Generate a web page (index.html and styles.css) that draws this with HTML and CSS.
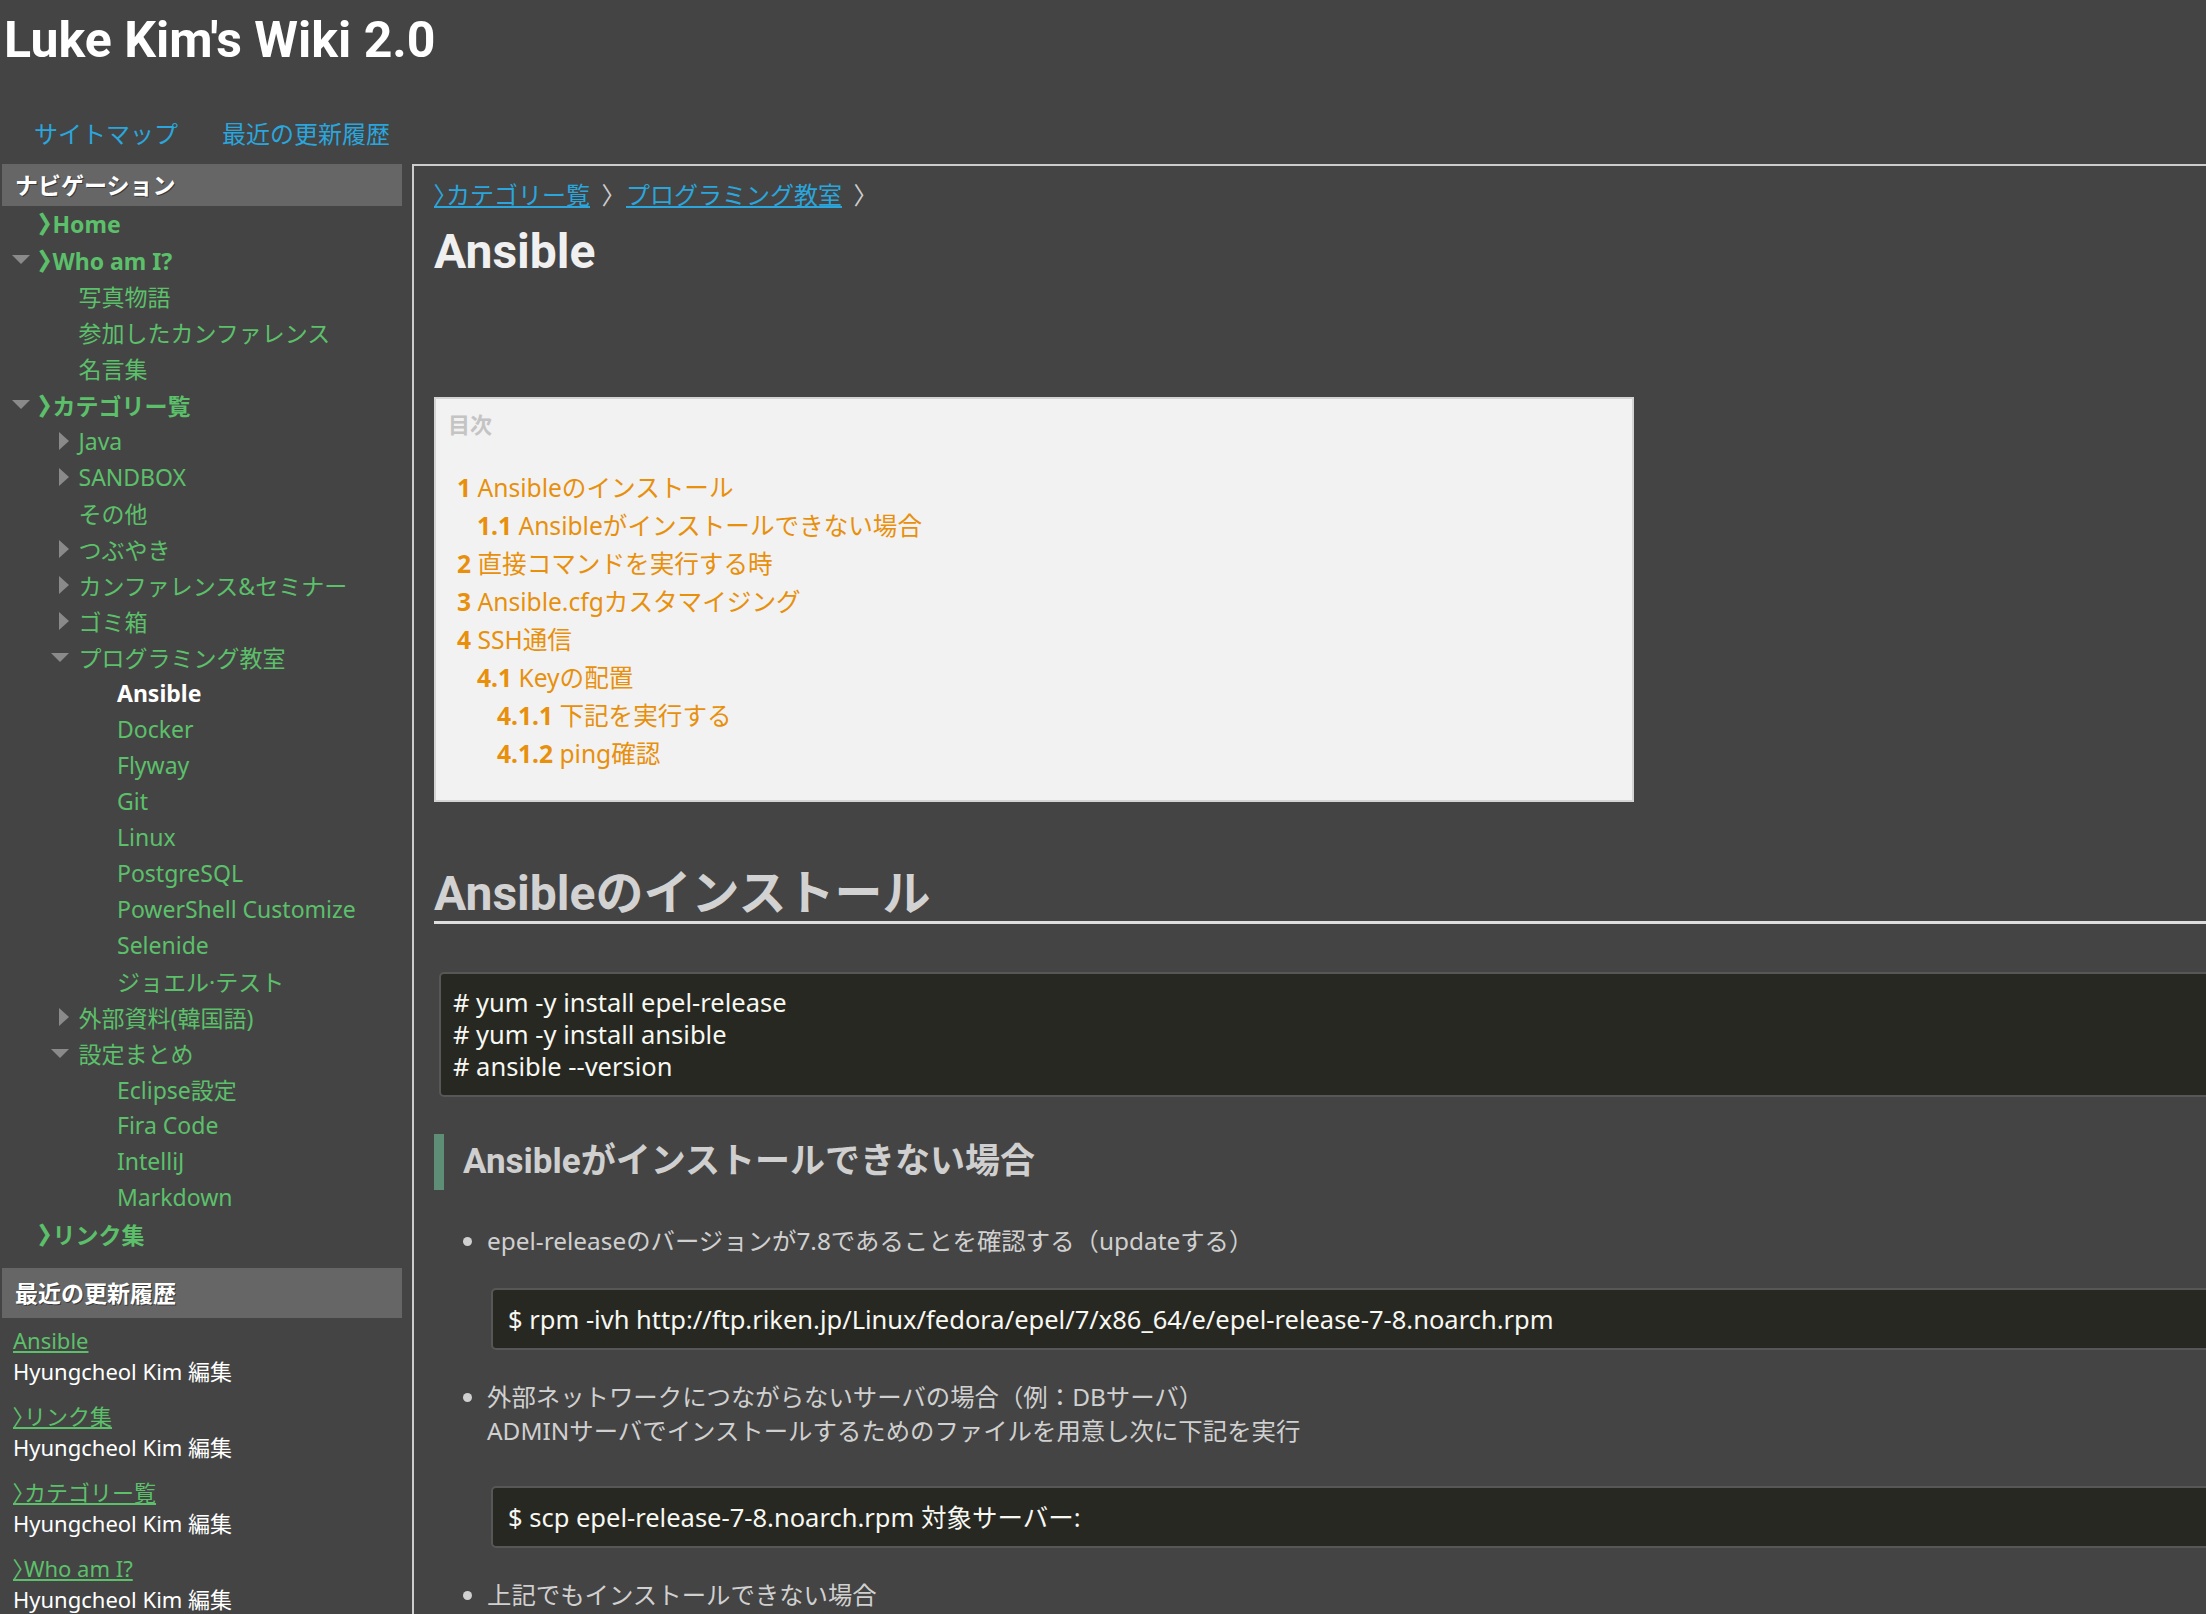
FILE: index.html
```html
<!DOCTYPE html>
<html lang="ja">
<head>
<meta charset="utf-8">
<title>Ansible - Luke Kim's Wiki 2.0</title>
<link rel="stylesheet" href="styles.css">
</head>
<body>
<header class="site-header">
  <h1 class="site-title">Luke Kim's Wiki 2.0</h1>
  <nav class="top-nav">
    <a href="#">サイトマップ</a>
    <a href="#">最近の更新履歴</a>
  </nav>
</header>
<div class="layout">
  <aside class="sidebar">
    <h2 class="side-head">ナビゲーション</h2>
    <ul class="tree">
      <li class="top"><div class="row"><span class="tg"></span><a class="lnk" href="#"><span class="chev">〉</span>Home</a></div></li>
      <li class="top"><div class="row"><span class="tg"><i class="down"></i></span><a class="lnk" href="#"><span class="chev">〉</span>Who am I?</a></div>
        <ul>
          <li><div class="row"><span class="tg"></span><a class="lnk" href="#">写真物語</a></div></li>
          <li><div class="row"><span class="tg"></span><a class="lnk" href="#">参加したカンファレンス</a></div></li>
          <li><div class="row"><span class="tg"></span><a class="lnk" href="#">名言集</a></div></li>
        </ul>
      </li>
      <li class="top"><div class="row"><span class="tg"><i class="down"></i></span><a class="lnk" href="#"><span class="chev">〉</span>カテゴリー覧</a></div>
        <ul>
          <li><div class="row"><span class="tg"><i class="right"></i></span><a class="lnk" href="#">Java</a></div></li>
          <li><div class="row"><span class="tg"><i class="right"></i></span><a class="lnk" href="#">SANDBOX</a></div></li>
          <li><div class="row"><span class="tg"></span><a class="lnk" href="#">その他</a></div></li>
          <li><div class="row"><span class="tg"><i class="right"></i></span><a class="lnk" href="#">つぶやき</a></div></li>
          <li><div class="row"><span class="tg"><i class="right"></i></span><a class="lnk" href="#">カンファレンス&amp;セミナー</a></div></li>
          <li><div class="row"><span class="tg"><i class="right"></i></span><a class="lnk" href="#">ゴミ箱</a></div></li>
          <li><div class="row"><span class="tg"><i class="down"></i></span><a class="lnk" href="#">プログラミング教室</a></div>
            <ul>
              <li><div class="row"><span class="tg"></span><a class="lnk current" href="#">Ansible</a></div></li>
              <li><div class="row"><span class="tg"></span><a class="lnk" href="#">Docker</a></div></li>
              <li><div class="row"><span class="tg"></span><a class="lnk" href="#">Flyway</a></div></li>
              <li><div class="row"><span class="tg"></span><a class="lnk" href="#">Git</a></div></li>
              <li><div class="row"><span class="tg"></span><a class="lnk" href="#">Linux</a></div></li>
              <li><div class="row"><span class="tg"></span><a class="lnk" href="#">PostgreSQL</a></div></li>
              <li><div class="row"><span class="tg"></span><a class="lnk" href="#">PowerShell Customize</a></div></li>
              <li><div class="row"><span class="tg"></span><a class="lnk" href="#">Selenide</a></div></li>
              <li><div class="row"><span class="tg"></span><a class="lnk" href="#">ジョエル·テスト</a></div></li>
            </ul>
          </li>
          <li><div class="row"><span class="tg"><i class="right"></i></span><a class="lnk" href="#">外部資料(韓国語)</a></div></li>
          <li><div class="row"><span class="tg"><i class="down"></i></span><a class="lnk" href="#">設定まとめ</a></div>
            <ul>
              <li><div class="row"><span class="tg"></span><a class="lnk" href="#">Eclipse設定</a></div></li>
              <li><div class="row"><span class="tg"></span><a class="lnk" href="#">Fira Code</a></div></li>
              <li><div class="row"><span class="tg"></span><a class="lnk" href="#">IntelliJ</a></div></li>
              <li><div class="row"><span class="tg"></span><a class="lnk" href="#">Markdown</a></div></li>
            </ul>
          </li>
        </ul>
      </li>
      <li class="top"><div class="row"><span class="tg"></span><a class="lnk" href="#"><span class="chev">〉</span>リンク集</a></div></li>
    </ul>

    <h2 class="side-head recent-head">最近の更新履歴</h2>
    <ul class="recent">
      <li><a href="#">Ansible</a><br><span class="who">Hyungcheol Kim 編集</span></li>
      <li><a href="#"><span class="chev">〉</span>リンク集</a><br><span class="who">Hyungcheol Kim 編集</span></li>
      <li><a href="#"><span class="chev">〉</span>カテゴリー覧</a><br><span class="who">Hyungcheol Kim 編集</span></li>
      <li><a href="#"><span class="chev">〉</span>Who am I?</a><br><span class="who">Hyungcheol Kim 編集</span></li>
    </ul>
  </aside>

  <main class="main">
    <nav class="crumbs"><a href="#"><span class="chev">〉</span>カテゴリー覧</a><span class="sep chev">〉</span><a href="#">プログラミング教室</a><span class="sep chev">〉</span></nav>
    <h1 class="page-title">Ansible</h1>

    <div class="toc">
      <div class="toc-title">目次</div>
      <ul class="toc-list">
        <li><a href="#"><b>1</b> Ansibleのインストール</a></li>
        <li class="l2"><a href="#"><b>1.1</b> Ansibleがインストールできない場合</a></li>
        <li><a href="#"><b>2</b> 直接コマンドを実行する時</a></li>
        <li><a href="#"><b>3</b> Ansible.cfgカスタマイジング</a></li>
        <li><a href="#"><b>4</b> SSH通信</a></li>
        <li class="l2"><a href="#"><b>4.1</b> Keyの配置</a></li>
        <li class="l3"><a href="#"><b>4.1.1</b> 下記を実行する</a></li>
        <li class="l3"><a href="#"><b>4.1.2</b> ping確認</a></li>
      </ul>
    </div>

    <h2 class="sec">Ansibleのインストール</h2>
    <pre class="code"># yum -y install epel-release
# yum -y install ansible
# ansible --version</pre>

    <h3 class="sub">Ansibleがインストールできない場合</h3>
    <ul class="bullets">
      <li>epel-releaseのバージョンが7.8であることを確認する（updateする）
        <pre class="code">$ rpm -ivh http://ftp.riken.jp/Linux/fedora/epel/7/x86_64/e/epel-release-7-8.noarch.rpm</pre>
      </li>
      <li>外部ネットワークにつながらないサーバの場合（例：DBサーバ）<br>ADMINサーバでインストールするためのファイルを用意し次に下記を実行
        <pre class="code later">$ scp epel-release-7-8.noarch.rpm 対象サーバー:</pre>
      </li>
      <li>上記でもインストールできない場合</li>
    </ul>
  </main>
</div>
</body>
</html>
```

FILE: styles.css
```css
html {
  background: #444444;
  overflow: hidden;
}

body {
  margin: 0;
  background: #444444;
  color: #cccccc;
  font-family: "Noto Sans", "Noto Sans CJK JP", sans-serif;
}

a {
  text-decoration: none;
}

.chev {
  font-family: "Noto Sans CJK JP", sans-serif;
  font-feature-settings: "palt";
}

/* ---------- header ---------- */
.site-header {
  height: 164px;
  box-sizing: border-box;
  padding: 11px 0 0 4px;
}

.site-title {
  margin: 0;
  font: 700 50px/58px Roboto, "Noto Sans CJK JP", sans-serif;
  color: #ffffff;
}

.top-nav {
  margin-top: 53px;
  padding-left: 30px;
  display: flex;
  gap: 44px;
  font-size: 24px;
  line-height: 24px;
}

.top-nav a {
  color: #2aa6dd;
}

/* ---------- layout ---------- */
.layout {
  display: grid;
  grid-template-columns: 412px 1880px;
  align-items: start;
}

/* ---------- sidebar ---------- */
.side-head {
  margin: 0 0 0 2px;
  width: 400px;
  box-sizing: border-box;
  padding-left: 13px;
  background: #666666;
  color: #ffffff;
  font-size: 23px;
  font-weight: 700;
  line-height: 42px;
  text-shadow: 1px 1px 0 #3a3a3a;
}

.tree,
.tree ul {
  list-style: none;
  margin: 0;
  padding: 0;
}

.tree {
  margin-top: -2px;
}

.tree ul {
  padding-left: 38.5px;
}

.row {
  display: flex;
  align-items: center;
  height: 36px;
  font-size: 23px;
}

.top > .row {
  height: 37px;
  font-weight: 700;
}

.top > .row .chev {
  -webkit-text-stroke: 1.3px currentColor;
  margin-right: 1px;
}

.tg {
  width: 40px;
  flex: none;
  display: flex;
  justify-content: flex-end;
  align-items: center;
  padding-right: 10px;
  box-sizing: border-box;
}

.down {
  width: 0;
  height: 0;
  border-left: 9px solid transparent;
  border-right: 9px solid transparent;
  border-top: 9px solid #8a8a8a;
}

.right {
  width: 0;
  height: 0;
  border-top: 9px solid transparent;
  border-bottom: 9px solid transparent;
  border-left: 10px solid #8a8a8a;
}

.lnk {
  color: #5cc06b;
  white-space: nowrap;
}

.lnk.current {
  color: #ffffff;
  font-weight: 700;
}

.recent-head {
  margin-top: 16px;
  line-height: 50px;
}

.recent {
  list-style: none;
  margin: 7px 0 0;
  padding: 0 0 0 13px;
  font-size: 22px;
  line-height: 31px;
}

.recent li {
  margin-bottom: 13px;
}

.recent a {
  color: #5cc06b;
  text-decoration: underline;
}

.recent .who {
  color: #ffffff;
}

/* ---------- main ---------- */
.main {
  border-left: 2px solid #cdcdcd;
  border-top: 2px solid #cdcdcd;
  padding: 11px 0 0 20px;
  min-height: 1500px;
}

.crumbs {
  font-size: 24px;
  line-height: 34px;
  color: #cccccc;
}

.crumbs a {
  color: #2aa6dd;
  text-decoration: underline;
}

.crumbs .sep {
  margin: 0 12px 0 12px;
}

.page-title {
  margin: 12px 0 0;
  font: 700 48px/56px Roboto, "Noto Sans CJK JP", sans-serif;
  color: #f0f0f0;
}

.toc {
  margin-top: 117px;
  width: 1200px;
  box-sizing: border-box;
  background: #f2f2f2;
  border: 2px solid #d4d4d4;
  padding: 10px 0 27px 12px;
}

.toc-title {
  font-size: 22px;
  font-weight: 700;
  line-height: 30px;
  color: #c4c4c4;
}

.toc-list {
  list-style: none;
  margin: 30px 0 0;
  padding: 0 0 0 9px;
  font-size: 24.6px;
  line-height: 38px;
}

.toc-list a {
  color: #e8900c;
}

.toc-list b {
  font-weight: 700;
}

.toc-list .l2 {
  padding-left: 20px;
}

.toc-list .l3 {
  padding-left: 40px;
}

.sec {
  margin: 65px 0 0;
  font: 700 48px/54px Roboto, "Noto Sans CJK JP", sans-serif;
  color: #d2d2d2;
  border-bottom: 3px solid #dedede;
}

.code {
  margin: 48px 0 0 5px;
  padding: 12px 12px 13px;
  background: #272822;
  border: 2px solid #575757;
  border-radius: 5px;
  color: #f8f8f2;
  font: 25.5px/32px "Noto Sans", "Noto Sans CJK JP", sans-serif;
  white-space: pre;
}

.sub {
  margin: 37px 0 0;
  border-left: 10px solid #5e8f76;
  padding-left: 19px;
  font: 700 35px/56px Roboto, "Noto Sans CJK JP", sans-serif;
  color: #cfcfcf;
}

.bullets {
  margin: 34px 0 0;
  padding-left: 53px;
  font-size: 24.4px;
  line-height: 34px;
  color: #d0d0d0;
}

.bullets .code {
  margin: 30px 0 30px 4px;
  padding: 13px 15px;
}

.bullets .code.later {
  margin-top: 38px;
}
```
